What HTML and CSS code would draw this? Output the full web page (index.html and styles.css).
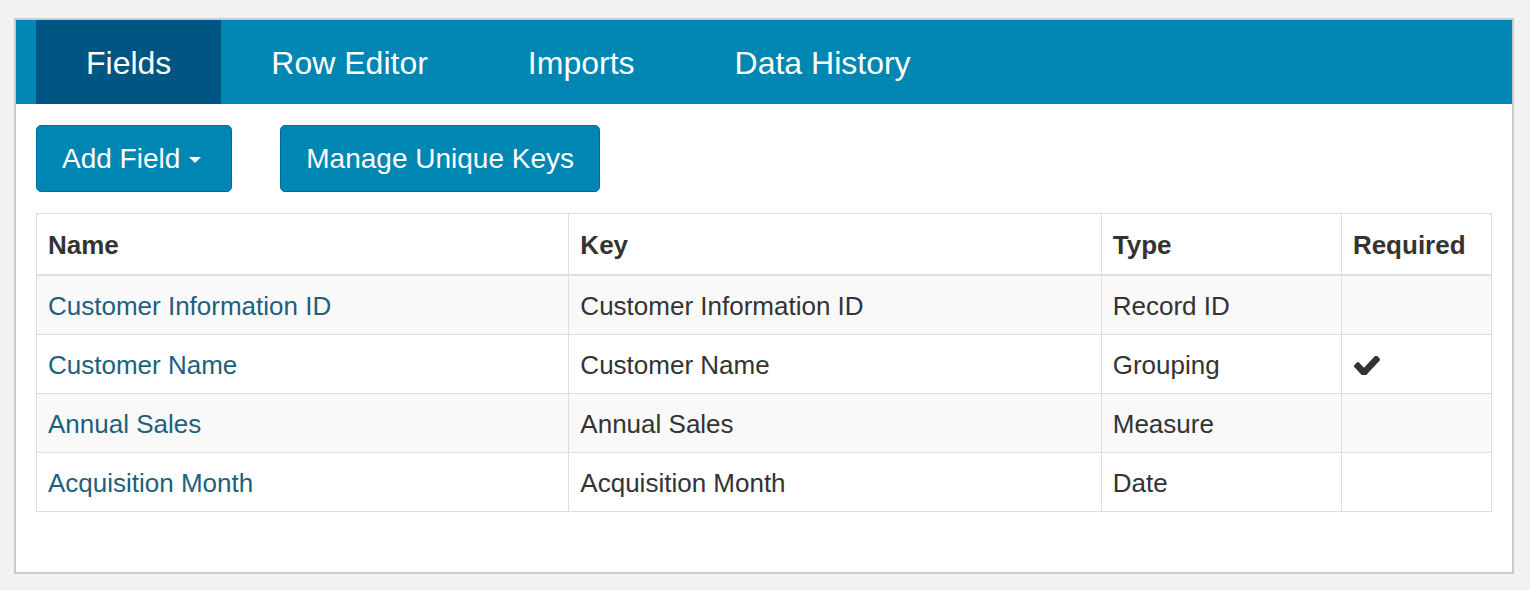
FILE: index.html
```html
<!DOCTYPE html>
<html>
<head>
<meta charset="utf-8">
<link rel="stylesheet" href="styles.css">
</head>
<body>
<div class="panel">
  <nav class="tabs">
    <a class="tab active">Fields</a>
    <a class="tab">Row Editor</a>
    <a class="tab">Imports</a>
    <a class="tab">Data History</a>
  </nav>
  <div class="body">
    <div class="toolbar">
      <button class="btn">Add Field<span class="caret"></span></button>
      <button class="btn">Manage Unique Keys</button>
    </div>
    <table class="fields">
      <colgroup>
        <col class="c-name"><col class="c-key"><col class="c-type"><col class="c-req">
      </colgroup>
      <thead>
        <tr><th>Name</th><th>Key</th><th>Type</th><th>Required</th></tr>
      </thead>
      <tbody>
        <tr><td><a class="link">Customer Information ID</a></td><td>Customer Information ID</td><td>Record ID</td><td></td></tr>
        <tr><td><a class="link">Customer Name</a></td><td>Customer Name</td><td>Grouping</td><td><svg class="check" viewBox="121 362 1550 1064" width="26" height="19" preserveAspectRatio="none"><path d="M1671 566q0 40-28 68l-724 724-136 136q-28 28-68 28t-68-28l-136-136-362-362q-28-28-28-68t28-68l136-136q28-28 68-28t68 28l294 295 656-657q28-28 68-28t68 28l136 136q28 28 28 68z" fill="#333"/></svg></td></tr>
        <tr><td><a class="link">Annual Sales</a></td><td>Annual Sales</td><td>Measure</td><td></td></tr>
        <tr><td><a class="link">Acquisition Month</a></td><td>Acquisition Month</td><td>Date</td><td></td></tr>
      </tbody>
    </table>
  </div>
</div>
</body>
</html>
```

FILE: styles.css
```css
html, body {
  margin: 0;
  padding: 0;
}
body {
  background: #f2f2f2;
  font-family: "Liberation Sans", Arial, sans-serif;
  color: #333;
  padding: 18px 0 0 14px;
  height: 590px;
  box-sizing: border-box;
}
.panel {
  width: 1500px;
  height: 556px;
  box-sizing: border-box;
  border: 2px solid #cbcbcb;
  background: #fff;
  display: flex;
  flex-direction: column;
}
.tabs {
  display: flex;
  height: 84px;
  background: #0086b3;
  padding-left: 20px;
}
.tab {
  display: flex;
  align-items: center;
  padding: 2px 50px 0 50px;
  color: #fff;
  font-size: 32px;
  line-height: 1;
}
.tab.active {
  background: #005682;
}
.body {
  padding: 21px 20px 0 20px;
}
.toolbar {
  display: flex;
  gap: 48px;
  margin-bottom: 21px;
}
.btn {
  font-family: "Liberation Sans", Arial, sans-serif;
  font-size: 28px;
  color: #fff;
  background: #0086b3;
  border: 1px solid #006f96;
  border-radius: 5px;
  height: 67px;
  padding: 0 25px;
  display: flex;
  align-items: center;
}
.caret {
  display: inline-block;
  width: 0;
  height: 0;
  margin-left: 9px;
  margin-right: 5px;
  margin-top: 2px;
  border-top: 6px solid #fff;
  border-left: 6px solid transparent;
  border-right: 6px solid transparent;
}
.fields {
  width: 1456px;
  border-collapse: collapse;
  border: 1px solid #ddd;
  font-size: 26px;
  table-layout: fixed;
}
.c-name { width: 532px; }
.c-key { width: 532px; }
.c-type { width: 240px; }
.c-req { width: 150px; }
.fields th, .fields td {
  border: 1px solid #ddd;
  text-align: left;
  line-height: 36px;
  padding: 12px 11px 10px 11px;
  vertical-align: middle;
}
.fields th {
  padding: 13px 11px 11px 11px;
  border-bottom: 2px solid #ddd;
  font-weight: bold;
  color: #333;
}
.fields tbody tr:nth-child(odd) {
  background: #f9f9f9;
}
.link {
  color: #1e5f7e;
}
.check {
  display: block;
  margin-left: 1px;
}
```
